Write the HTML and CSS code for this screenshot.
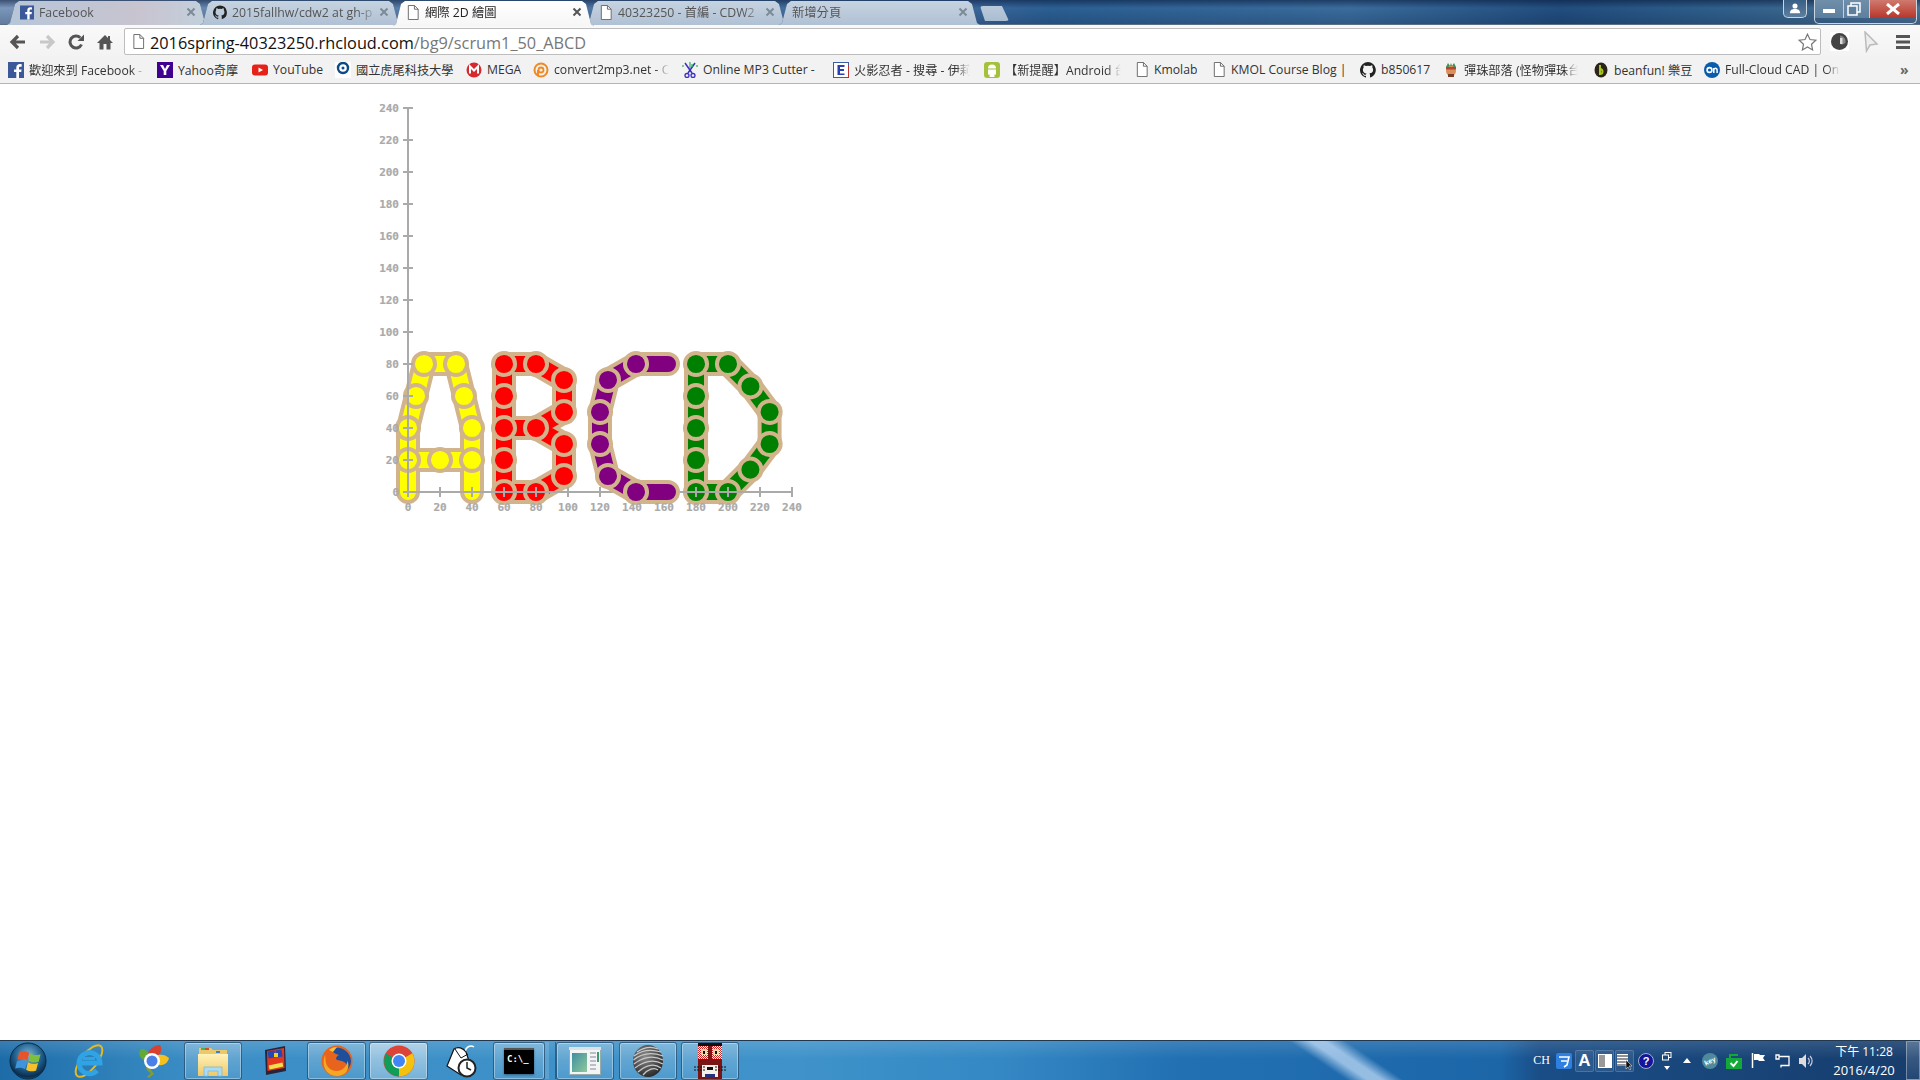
FILE: index.html
```html
<!DOCTYPE html>
<html lang="zh-Hant">
<head>
<meta charset="utf-8">
<title>網際 2D 繪圖</title>
<link rel="stylesheet" href="styles.css">
</head>
<body>
<svg class="defs" width="0" height="0" aria-hidden="true">
  <defs>
    <symbol id="i-fb" viewBox="0 0 16 16"><rect width="16" height="16" fill="#3b5998"/><path d="M11 16V10h2.2l.4-2.6H11V6c0-.8.3-1.3 1.4-1.3h1.3V2.3C13.3 2.2 12.6 2.1 11.8 2.1 9.8 2.1 8.3 3.3 8.3 5.6v1.8H6V10h2.3v6z" fill="#fff"/></symbol>
    <symbol id="i-page" viewBox="0 0 14 16"><path d="M2 .5h6.5L12.5 4.500v11h-10.500z" fill="#fff" stroke="#666"/><path d="M8.500.5v4h4" fill="none" stroke="#666"/></symbol>
    <symbol id="i-gh" viewBox="0 0 16 16"><path d="M8 0a8 8 0 0 0-2.500 15.600c.4.100.5-.2.500-.4v-1.400c-2.200.5-2.700-1-2.700-1-.4-.9-.9-1.200-.9-1.200-.7-.5.100-.5.100-.5.800.100 1.200.8 1.200.8.700 1.200 1.900.9 2.300.7.100-.5.300-.9.500-1.100-1.800-.2-3.600-.9-3.600-4 0-.9.300-1.600.8-2.100-.1-.2-.4-1 .1-2.100 0 0 .7-.2 2.200.8a7.600 7.600 0 0 1 4 0c1.500-1 2.200-.8 2.200-.8.400 1.100.2 1.900.1 2.100.5.600.8 1.300.8 2.100 0 3.100-1.900 3.700-3.700 3.900.3.300.6.800.6 1.500v2.200c0 .2.100.5.600.4A8 8 0 0 0 8 0z" fill="#222"/></symbol>
    <symbol id="i-x" viewBox="0 0 10 10"><path d="M1.500 1.500l7 7M8.500 1.500l-7 7" stroke="currentColor" stroke-width="2"/></symbol>
    <radialGradient id="g-orb" cx="50%" cy="35%" r="70%"><stop offset="0" stop-color="#7fb7d8"/><stop offset=".55" stop-color="#1d5d8c"/><stop offset=".85" stop-color="#0a2c4c"/><stop offset="1" stop-color="#2a89a8"/></radialGradient>
    <linearGradient id="g-folder" x1="0" y1="0" x2="0" y2="1"><stop offset="0" stop-color="#fff3b8"/><stop offset="1" stop-color="#eec868"/></linearGradient>
    <radialGradient id="g-ball" cx="40%" cy="35%" r="70%"><stop offset="0" stop-color="#8a8a8a"/><stop offset="1" stop-color="#262626"/></radialGradient>
    <linearGradient id="g-prev" x1="0" y1="0" x2="1" y2="1"><stop offset="0" stop-color="#3e8fa0"/><stop offset="1" stop-color="#8ec79b"/></linearGradient>
    <pattern id="p-check" width="2" height="2" patternUnits="userSpaceOnUse"><rect width="2" height="2" fill="#d92020"/><rect width="1" height="1" fill="#fff"/><rect x="1" y="1" width="1" height="1" fill="#fff"/></pattern>
  </defs>
</svg>

<header class="browser">
  <div class="tabbar">
    <div class="tabs">
      <div class="tab tab-fb"><svg class="tab-ico"><use href="#i-fb"/></svg><span class="tab-title">Facebook</span><svg class="tab-x"><use href="#i-x"/></svg></div>
      <div class="tab"><svg class="tab-ico"><use href="#i-gh"/></svg><span class="tab-title">2015fallhw/cdw2 at gh-p</span><svg class="tab-x"><use href="#i-x"/></svg></div>
      <div class="tab tab-on"><svg class="tab-ico"><use href="#i-page"/></svg><span class="tab-title">網際 2D 繪圖</span><svg class="tab-x"><use href="#i-x"/></svg></div>
      <div class="tab"><svg class="tab-ico"><use href="#i-page"/></svg><span class="tab-title">40323250 - 首編 - CDW2</span><svg class="tab-x"><use href="#i-x"/></svg></div>
      <div class="tab"><span class="tab-title">新增分頁</span><svg class="tab-x"><use href="#i-x"/></svg></div>
    </div>
    <div class="newtab"></div>
    <div class="winbtns">
      <div class="wb wb-user"><svg width="12" height="11" viewBox="0 0 14 13"><circle cx="7" cy="3.500" r="3" fill="#fff"/><path d="M1 12c0-4 2.500-5 6-5s6 1 6 5z" fill="#fff"/></svg></div>
      <div class="wgroup">
        <div class="wb wb-min"><span class="min-bar"></span></div>
        <div class="wb wb-max"><svg width="14" height="14" viewBox="0 0 14 14"><rect x="4" y="1" width="9" height="9" fill="none" stroke="#fff" stroke-width="1.500"/><rect x="1" y="4" width="9" height="9" fill="#5d7f9f" stroke="#fff" stroke-width="1.500"/></svg></div>
        <div class="wb wb-close"><svg width="16" height="12" viewBox="0 0 16 12"><path d="M2 1l12 10M14 1L2 11" stroke="#fff" stroke-width="3"/></svg></div>
      </div>
    </div>
  </div>

  <div class="toolbar">
    <div class="nav"><svg width="18" height="16" viewBox="0 0 18 16"><path d="M16 8H4M9 2L3 8l6 6" fill="none" stroke="#555" stroke-width="3.200"/></svg></div>
    <div class="nav"><svg width="18" height="16" viewBox="0 0 18 16"><path d="M2 8h12M9 2l6 6-6 6" fill="none" stroke="#c8c8c8" stroke-width="3.200"/></svg></div>
    <div class="nav"><svg width="16" height="16" viewBox="0 0 16 16"><path d="M13.500 10.500A6 6 0 1 1 12.300 3.800" fill="none" stroke="#555" stroke-width="3"/><path d="M9.500 7H16V.5z" fill="#555"/></svg></div>
    <div class="nav"><svg width="16" height="16" viewBox="0 0 16 16"><path d="M8 1L0 9h2.500v6.500H6.500V10h3v5.500h4V9H16L13 6V2h-2v2z" fill="#555"/></svg></div>
    <div class="omnibox">
      <svg class="omni-page"><use href="#i-page"/></svg>
      <span class="url"><span class="url-host">2016spring-40323250.rhcloud.com</span>/bg9/scrum1_50_ABCD</span>
      <svg class="star" width="19" height="18" viewBox="0 0 19 18"><path d="M9.500 1.200l2.500 5.300 5.800.7-4.300 4 1.100 5.700-5.100-2.900-5.100 2.900 1.100-5.700-4.300-4 5.800-.7z" fill="#fff" stroke="#777" stroke-width="1.200"/></svg>
    </div>
    <div class="actions">
      <div class="act"><svg width="19" height="19" viewBox="0 0 19 19"><rect width="19" height="19" fill="#fff"/><circle cx="9.500" cy="9.500" r="8.500" fill="#444"/><path d="M10 3.500a6 6 0 0 1 5.500 7.500l-3 1.500L10 12z" fill="#888"/><rect x="10" y="6" width="2.500" height="6" fill="#ddd"/></svg></div>
      <div class="act"><svg width="16" height="22" viewBox="0 0 16 22"><path d="M2 1l1.500 19 3.500-6 7-1z" fill="#eee" stroke="#bbb" stroke-width="1.500"/></svg></div>
      <div class="act"><svg width="14" height="14" viewBox="0 0 14 14"><path d="M0 0h14v3H0zM0 5.500h14v3H0zM0 11h14v3H0z" fill="#555"/></svg></div>
    </div>
  </div>

  <nav class="bookmarks">
    <a class="bm"><svg class="bm-ico"><use href="#i-fb"/></svg><span class="bm-t fade">歡迎來到 Facebook -</span></a>
    <a class="bm"><svg class="bm-ico" viewBox="0 0 16 16"><rect width="16" height="16" fill="#400090"/><path d="M3 3h3l2 4 2-4h3L9.300 9v4H6.700V9z" fill="#fff"/></svg><span class="bm-t">Yahoo奇摩</span></a>
    <a class="bm"><svg class="bm-ico" viewBox="0 0 16 16"><rect y="2.500" width="16" height="11" rx="3" fill="#e62117"/><path d="M6.500 5.500v5L11 8z" fill="#fff"/></svg><span class="bm-t">YouTube</span></a>
    <a class="bm"><svg class="bm-ico" viewBox="0 0 16 16"><rect width="16" height="16" fill="#fff"/><circle cx="8" cy="6" r="5" fill="none" stroke="#0b4a86" stroke-width="2.400"/><circle cx="8" cy="6" r="1.500" fill="#0b4a86"/></svg><span class="bm-t">國立虎尾科技大學</span></a>
    <a class="bm"><svg class="bm-ico" viewBox="0 0 16 16"><circle cx="8" cy="8" r="7.500" fill="#d9272e"/><path d="M4 11.500V4.500l4 4 4-4v7" fill="none" stroke="#fff" stroke-width="2"/></svg><span class="bm-t">MEGA</span></a>
    <a class="bm"><svg class="bm-ico" viewBox="0 0 16 16"><circle cx="8" cy="8" r="6.500" fill="none" stroke="#f08a24" stroke-width="2"/><circle cx="8" cy="8" r="2.500" fill="none" stroke="#f08a24" stroke-width="1.800"/><path d="M5 8v6" stroke="#f08a24" stroke-width="2"/></svg><span class="bm-t fade">convert2mp3.net - C</span></a>
    <a class="bm"><svg class="bm-ico" viewBox="0 0 16 16"><path d="M3 1l7 10M13 1L6 11" stroke="#3a2fc0" stroke-width="1.500"/><circle cx="5" cy="13.500" r="2" fill="none" stroke="#3a2fc0" stroke-width="1.300"/><circle cx="11" cy="13.500" r="2" fill="none" stroke="#3a2fc0" stroke-width="1.300"/><path d="M8 0v6M10 2v3M15 3v2M1 3v2" stroke="#27b35a" stroke-width="1.200"/></svg><span class="bm-t">Online MP3 Cutter -</span></a>
    <a class="bm"><svg class="bm-ico" viewBox="0 0 16 16"><rect x=".5" y=".5" width="15" height="15" fill="#fff" stroke="#3b5fa5"/><path d="M15.500 4v11.500H4" fill="none" stroke="#b33"/><path d="M4.500 3h7v2H7v2h4v2H7v2.500h4.500V13h-7z" fill="#2a3fb0"/></svg><span class="bm-t fade">火影忍者 - 搜尋 - 伊莉</span></a>
    <a class="bm"><svg class="bm-ico" viewBox="0 0 16 16"><rect width="16" height="16" rx="3" fill="#a4c13c"/><path d="M4 6.500a4 4 0 0 1 8 0zM4 7.500h8v5H10.500v2.500h-5V12.500H4z" fill="#fff"/></svg><span class="bm-t fade">【新提醒】Android 台</span></a>
    <a class="bm"><svg class="bm-ico pg"><use href="#i-page"/></svg><span class="bm-t">Kmolab</span></a>
    <a class="bm"><svg class="bm-ico pg"><use href="#i-page"/></svg><span class="bm-t">KMOL Course Blog |</span></a>
    <a class="bm"><svg class="bm-ico"><use href="#i-gh"/></svg><span class="bm-t">b850617</span></a>
    <a class="bm"><svg class="bm-ico" viewBox="0 0 16 16"><path d="M3 5l2-4 2 3 1-3 1 3 2-3 2 4z" fill="#3f8f5a"/><circle cx="8" cy="9" r="5" fill="#d9905a"/><rect x="3" y="5" width="10" height="2.500" fill="#b5452f"/><path d="M5 15h6v-3H5z" fill="#7c3b22"/></svg><span class="bm-t fade">彈珠部落 (怪物彈珠台</span></a>
    <a class="bm"><svg class="bm-ico" viewBox="0 0 16 16"><ellipse cx="8" cy="8" rx="6.500" ry="7.500" fill="#2b2418"/><path d="M7 3v9a2.500 2.500 0 1 0 0-5" fill="none" stroke="#a8c81e" stroke-width="2"/></svg><span class="bm-t">beanfun! 樂豆</span></a>
    <a class="bm"><svg class="bm-ico" viewBox="0 0 16 16"><circle cx="8" cy="8" r="8" fill="#0b5cad"/><circle cx="5.500" cy="8" r="2.400" fill="none" stroke="#fff" stroke-width="1.600"/><path d="M9.800 11V6M9.800 7.500c1.800-2 3.300-1 3.300 .5v3" fill="none" stroke="#fff" stroke-width="1.500"/></svg><span class="bm-t fade">Full-Cloud CAD | Onshape</span></a>
    <span class="bm-more">»</span>
  </nav>
</header>

<main class="content">
  <svg class="chart" width="500" height="440" viewBox="0 0 500 440">
    <g transform="translate(48 393) scale(1.6 -1.6)" fill="none" stroke-linecap="round" stroke-linejoin="round">
      <g stroke="#d2b48c" stroke-width="15">
        <path d="M0 0V40L5 60L10 80H30L35 60L40 40V0M0 20H40"/>
        <path d="M60 0V80H80L97.500 70V50L80 40H60M80 40L97.500 30V10L80 0H60"/>
        <path d="M180 0V80H200L214 66L226 50V30L214 14L200 0H180"/>
      </g>
      <path stroke="#ff0" stroke-width="10" d="M0 0V40L5 60L10 80H30L35 60L40 40V0M0 20H40"/>
      <path stroke="#f00" stroke-width="10" d="M60 0V80H80L97.500 70V50L80 40H60M80 40L97.500 30V10L80 0H60"/>
      <path stroke="#008000" stroke-width="10" d="M180 0V80H200L214 66L226 50V30L214 14L200 0H180"/>
      <g stroke="#d2b48c" stroke-width="2.500" fill="#ff0">
        <circle cx="0" cy="20" r="6.900"/><circle cx="0" cy="40" r="6.900"/><circle cx="5" cy="60" r="6.900"/><circle cx="10" cy="80" r="6.900"/><circle cx="30" cy="80" r="6.900"/><circle cx="35" cy="60" r="6.900"/><circle cx="40" cy="40" r="6.900"/><circle cx="40" cy="20" r="6.900"/><circle cx="20" cy="20" r="6.900"/>
      </g>
      <g stroke="#d2b48c" stroke-width="2.500" fill="#f00">
        <circle cx="60" cy="0" r="6.900"/><circle cx="60" cy="20" r="6.900"/><circle cx="60" cy="40" r="6.900"/><circle cx="60" cy="60" r="6.900"/><circle cx="60" cy="80" r="6.900"/><circle cx="80" cy="80" r="6.900"/><circle cx="97.500" cy="70" r="6.900"/><circle cx="97.500" cy="50" r="6.900"/><circle cx="80" cy="40" r="6.900"/><circle cx="97.500" cy="30" r="6.900"/><circle cx="97.500" cy="10" r="6.900"/><circle cx="80" cy="0" r="6.900"/>
      </g>
      <g stroke="#d2b48c" stroke-width="2.500" fill="#008000">
        <circle cx="180" cy="0" r="6.900"/><circle cx="180" cy="20" r="6.900"/><circle cx="180" cy="40" r="6.900"/><circle cx="180" cy="60" r="6.900"/><circle cx="180" cy="80" r="6.900"/><circle cx="200" cy="80" r="6.900"/><circle cx="214" cy="66" r="6.900"/><circle cx="226" cy="50" r="6.900"/><circle cx="226" cy="30" r="6.900"/><circle cx="214" cy="14" r="6.900"/><circle cx="200" cy="0" r="6.900"/>
      </g>
    </g>
    <g transform="translate(48 393)" stroke="#aaa" stroke-width="2" fill="none">
      <path d="M0 0V-384M0 0H384"/>
      <path d="M-5 0H5M-5 -32H5M-5 -64H5M-5 -96H5M-5 -128H5M-5 -160H5M-5 -192H5M-5 -224H5M-5 -256H5M-5 -288H5M-5 -320H5M-5 -352H5M-5 -384H5"/>
      <path d="M0 -5V5M32 -5V5M64 -5V5M96 -5V5M128 -5V5M160 -5V5M192 -5V5M224 -5V5M256 -5V5M288 -5V5M320 -5V5M352 -5V5M384 -5V5"/>
    </g>
    <g transform="translate(48 393) scale(1.6 -1.6)" fill="none" stroke-linecap="round" stroke-linejoin="round">
      <path stroke="#d2b48c" stroke-width="15" d="M162.500 80H142.500L125 70L120 50V30L125 10L142.500 0H162.500"/>
      <path stroke="#800080" stroke-width="10" d="M162.500 80H142.500L125 70L120 50V30L125 10L142.500 0H162.500"/>
      <g stroke="#d2b48c" stroke-width="2.500" fill="#800080">
        <circle cx="142.500" cy="80" r="6.900"/><circle cx="125" cy="70" r="6.900"/><circle cx="120" cy="50" r="6.900"/><circle cx="120" cy="30" r="6.900"/><circle cx="125" cy="10" r="6.900"/><circle cx="142.500" cy="0" r="6.900"/>
      </g>
    </g>
    <g class="lab lab-y" transform="translate(39 397)">
      <text y="0">0</text><text y="-32">20</text><text y="-64">40</text><text y="-96">60</text><text y="-128">80</text><text y="-160">100</text><text y="-192">120</text><text y="-224">140</text><text y="-256">160</text><text y="-288">180</text><text y="-320">200</text><text y="-352">220</text><text y="-384">240</text>
    </g>
    <g class="lab lab-x" transform="translate(48 412)">
      <text x="0">0</text><text x="32">20</text><text x="64">40</text><text x="96">60</text><text x="128">80</text><text x="160">100</text><text x="192">120</text><text x="224">140</text><text x="256">160</text><text x="288">180</text><text x="320">200</text><text x="352">220</text><text x="384">240</text>
    </g>
  </svg>
</main>

<footer class="taskbar">
  <div class="task-left">
    <div class="tb tb-orb"><svg width="38" height="38" viewBox="0 0 38 38"><circle cx="19" cy="19" r="18" fill="url(#g-orb)" stroke="#0b2a44"/><g transform="translate(19 19) scale(1.25) translate(-17 -19)"><path d="M10 12c3-1.500 5-1 8 .5l-1.500 6c-3-1.500-5-1.500-8-.5z" fill="#e8542a"/><path d="M19 13c3 1.500 5 1.500 8 .5l-1.500 6c-3 1-5 1-8-.5z" fill="#7ec03c"/><path d="M8.200 19c3-1 5-1 8 .5l-1.500 6c-3-1.500-5-1.500-8-.5z" fill="#3f95dc"/><path d="M17 20c3 1.500 5 1.500 8 .5l-1.500 6c-3 1-5 1-8-.5z" fill="#f5c02c"/></g></svg></div>
    <div class="tb tb-ie"><svg width="34" height="34" viewBox="0 0 34 34"><ellipse cx="17" cy="17" rx="19" ry="8" transform="rotate(-52 17 17)" fill="none" stroke="#e6b91e" stroke-width="2"/><path d="M9 19h19a10.500 10.500 0 1 0-3 7.500" fill="none" stroke="#2fa3e3" stroke-width="5"/><path d="M11 14.500h12" stroke="#2fa3e3" stroke-width="3"/></svg></div>
    <div class="tb tb-can"><svg width="32" height="34" viewBox="0 0 32 34"><path d="M8 17C2 14 1 8 4 5c4 0 7 2 8 5z" fill="#63a93a"/><path d="M11 9c2-5 7-8 12-8 2 3 1 8-1 10z" fill="#d9402f"/><path d="M21 11c4-1 8 0 11 3-1 5-6 8-10 7z" fill="#f3c01e"/><path d="M9 19c-1 6 2 9 5 10l-4 4 2 1 5-4z" fill="#7d9c3a"/><circle cx="15" cy="17" r="8" fill="#fff"/><circle cx="15" cy="17" r="5.500" fill="#4a7fe8"/></svg></div>
    <div class="tb tb-box tb-w58"><svg width="32" height="32" viewBox="0 0 32 32"><path d="M2 3h12l2 2h14v10H2z" fill="#e9c96b"/><rect x="4" y="3" width="4" height="2" fill="#4caf50"/><rect x="8" y="3" width="4" height="2" fill="#d9482f"/><rect x="19" y="6" width="4" height="2" fill="#3f7fcb"/><path d="M1 9h30v22H1z" fill="url(#g-folder)"/><path d="M7 31V22h18v9h-4v-5H11v5z" fill="#a9dcf2" stroke="#7fb9d8" stroke-width=".800"/></svg></div>
    <div class="tb tb-w63"><svg width="24" height="30" viewBox="0 0 24 30"><path d="M2 4L22 0l1 25-20 4z" fill="#2a2438"/><path d="M4 5l17-3 .5 20-17 3z" fill="#e2381f"/><rect x="5" y="5" width="7" height="7" fill="#2447b3" transform="rotate(-10 8 8)"/><rect x="13" y="4" width="6" height="7" fill="#2447b3" transform="rotate(-10 16 7)"/><rect x="11" y="7" width="4" height="4" fill="#f3d21e"/><rect x="6" y="18" width="14" height="4" fill="#f5e04a" transform="rotate(-12 13 20)"/></svg></div>
    <div class="tb tb-box tb-w59"><svg width="32" height="32" viewBox="0 0 32 32"><circle cx="16" cy="16" r="15.500" fill="#e8641c"/><path d="M10 4a14 14 0 0 1 20 12c0 4-2 7-4 9 1-5-1-7-3-8-2-2-7-1-8-3 0-2 1-3 3-4-3-1-6-2-8-6z" fill="#1d4f9c"/><path d="M4 10c1 4 0 8 3 12 4 5 12 5 16 1 3-3 4-7 3-8 3 5 1 13-5 15-8 3-16-1-18-9-1-4 0-8 1-11z" fill="#f5a623"/><path d="M8 5c2-2 5-3 8-3l-4 5z" fill="#f8c13a"/></svg></div>
    <div class="tb tb-box tb-w59 tb-hot"><svg width="32" height="32" viewBox="0 0 32 32"><circle cx="16" cy="16" r="15.500" fill="#db4437"/><path d="M16 16L3 8.500A15.500 15.500 0 0 0 16 31.500z" fill="#0f9d58"/><path d="M16 16l13.400-7.750A15.500 15.500 0 0 1 16 31.500z" fill="#f4c20d"/><circle cx="16" cy="16" r="7.500" fill="#fff"/><circle cx="16" cy="16" r="6" fill="#4285f4"/></svg></div>
    <div class="tb tb-w65"><svg width="34" height="34" viewBox="0 0 34 34"><path d="M21 8c1-6 6-7 9-5" fill="none" stroke="#fff" stroke-width="1.500"/><path d="M10 5L3 22l14 9 8-14-3-9c-3-4-8-6-12-3z" fill="#fff" stroke="#111" stroke-width="1.200"/><path d="M11 5l6 9M17 14l7-4" stroke="#111" stroke-width="1" fill="none"/><circle cx="23" cy="24" r="8.500" fill="#fff" stroke="#222" stroke-width="2"/><path d="M23 18v6l4 2" fill="none" stroke="#222" stroke-width="1.500"/></svg></div>
    <div class="tb tb-box tb-w52"><div class="cmd"><span class="cmd-t">C:\_</span></div></div>
    <span class="tb-sliver"></span>
    <div class="tb tb-box tb-w58"><svg width="32" height="28" viewBox="0 0 32 28"><rect x=".5" y=".5" width="31" height="27" fill="#f3f5f5" stroke="#9aa"/><rect y="0" width="32" height="3" fill="#d9e4e8"/><rect x="3" y="6" width="15" height="19" fill="url(#g-prev)"/><path d="M21 6h6M21 10h6M21 14h6M21 18h6M21 22h6" stroke="#aab" stroke-width="1.500"/><rect x="28" y="5" width="2" height="10" fill="#3a9a7a"/></svg></div>
    <div class="tb tb-box tb-w58"><svg width="32" height="34" viewBox="0 0 32 34"><ellipse cx="16" cy="17" rx="15" ry="16" fill="url(#g-ball)"/><path d="M5 8c7-5 14-6 21-3M2 12C10 6 19 5 29 8M1.500 16C10 9 20 8 31 12M2 20C11 13 21 11 31 16M3 24C12 17 22 15 31 20M6 28C14 21 22 19 29 24M11 31c5-6 11-8 15-5" fill="none" stroke="#c8c8c8" stroke-width="1.300"/></svg></div>
    <div class="tb tb-box tb-w58"><svg width="32" height="36" viewBox="0 0 32 36"><rect x="4" y="0" width="24" height="36" fill="#7a1515"/><rect x="4" y="0" width="24" height="3" fill="#111"/><rect x="4" y="3" width="10" height="13" fill="url(#p-check)"/><rect x="18" y="3" width="10" height="13" fill="url(#p-check)"/><rect x="7" y="6" width="6" height="6" fill="#f0d8a8"/><rect x="19" y="6" width="6" height="6" fill="#f0d8a8"/><rect x="9" y="8" width="2" height="3" fill="#111"/><rect x="21" y="8" width="2" height="3" fill="#111"/><rect x="8" y="22" width="16" height="12" fill="#f4efe8"/><path d="M0 24h11M0 27h11M21 24h11M21 27h11" stroke="#111" stroke-width="1.200" stroke-dasharray="2 1"/><rect x="13" y="24" width="6" height="3" fill="#111"/><rect x="11" y="31" width="10" height="3" fill="#23327a"/></svg></div>
  </div>
  <div class="tray">
    <span class="tray-ch">CH</span>
    <svg class="t-i" width="16" height="16" viewBox="0 0 16 16"><rect width="16" height="16" rx="2" fill="#2f7fe0"/><path d="M3 4h10l-2 8-3 2M5 8h6" fill="none" stroke="#fff" stroke-width="1.600"/></svg>
    <div class="ime">
      <span class="ime-b ime-a">A</span>
      <span class="ime-b"><svg width="16" height="16" viewBox="0 0 16 16"><rect x="1" y="1" width="14" height="14" fill="#fff"/><rect x="2" y="2" width="6" height="12" fill="#999"/></svg></span>
      <span class="ime-b"><svg width="17" height="18" viewBox="0 0 17 18"><rect x="1" y="2" width="11" height="12" fill="#fff"/><path d="M1 4h11M1 7h11M1 10h11M1 13h9" stroke="#223" stroke-width="1"/><path d="M10 8v9l2-2 2 3 1-1-2-3h3z" fill="#111" stroke="#fff" stroke-width=".500"/></svg></span>
    </div>
    <span class="t-q">?</span>
    <div class="t-stack"><svg width="10" height="9" viewBox="0 0 10 9"><rect x="3" y=".5" width="6" height="5" fill="none" stroke="#fff"/><rect x=".5" y="3" width="6" height="5" fill="#1f4a78" stroke="#fff"/></svg><svg width="6" height="4" viewBox="0 0 6 4"><path d="M0 0h6L3 4z" fill="#fff"/></svg></div>
    <svg class="t-tri" width="8" height="5" viewBox="0 0 8 5"><path d="M0 5h8L4 0z" fill="#fff"/></svg>
    <svg class="t-key" width="16" height="16" viewBox="0 0 16 16"><circle cx="8" cy="8" r="8" fill="#4f8a9c"/><text x="8" y="10.500" class="key-t" transform="rotate(-25 8 8)">key</text></svg>
    <svg class="t-i2" width="16" height="17" viewBox="0 0 16 17"><rect y="6" width="16" height="11" fill="#14a83a"/><path d="M4 7V3h8" fill="none" stroke="#14a83a" stroke-width="2"/><path d="M4.500 11l3 3 4-5" fill="none" stroke="#fff" stroke-width="2"/></svg>
    <svg class="t-i2" width="15" height="15" viewBox="0 0 15 15"><path d="M1.500 0v15" stroke="#fff" stroke-width="1.500"/><path d="M3 1h5l1 1h5l-2 3 2 3H8L7 7H3z" fill="#fff"/></svg>
    <svg class="t-i2" width="15" height="15" viewBox="0 0 15 15"><path d="M1 2h3v4H1zM4 3.500h10v9H6v2" fill="none" stroke="#fff" stroke-width="1.300"/></svg>
    <svg class="t-i3" width="15" height="14" viewBox="0 0 15 14"><path d="M0 4h3l4-4v14l-4-4H0z" fill="#ddd"/><path d="M9 4a4 4 0 0 1 0 6M11 2a7 7 0 0 1 0 10" fill="none" stroke="#ccd" stroke-width="1.200"/></svg>
    <div class="clock"><span>下午 11:28</span><span class="clock-d">2016/4/20</span></div>
    <div class="show-desk"></div>
  </div>
</footer>
</body>
</html>
```
FILE: styles.css
```css
* { box-sizing: border-box; }
html, body { margin: 0; height: 100%; }
body {
  display: flex;
  flex-direction: column;
  height: 100vh;
  overflow: hidden;
  background: #fff;
  font-family: "Open Sans", "Noto Sans CJK TC", sans-serif;
}
.defs { position: absolute; }

/* browser frame */
.tabbar {
  display: flex;
  height: 25px;
  padding: 1px 3px 0 7px;
  background:
    linear-gradient(180deg, rgba(8, 24, 56, .55) 0, rgba(8, 24, 56, 0) 8px, rgba(8, 24, 56, .22) 100%),
    linear-gradient(90deg, #7b97bb 0, #5d83ac 300px, #3a669a 980px, #2b5f93 1050px, #3a6c9c 1350px, #214d7e 1560px, #2f5f8b 1720px, #4c7193 1920px);
  border-bottom: 1px solid #5d6f85;
}
.tabs { display: flex; }
.tab {
  position: relative;
  display: flex;
  align-items: center;
  width: 201px;
  height: 24px;
  margin-right: -8px;
  padding: 0 12px 2px 13px;
  color: #555;
  font-size: 12.3px;
  filter: drop-shadow(0 0 .6px #3f5066);
}
.tab::before {
  content: "";
  position: absolute;
  inset: 0;
  z-index: -1;
  background: linear-gradient(180deg, #c6d3e0, #b0c1d4);
  clip-path: polygon(0 100%, 3px 92%, 8px 12%, 12px 0, calc(100% - 12px) 0, calc(100% - 8px) 12%, calc(100% - 3px) 92%, 100% 100%);
}
.tab-fb::before { background: linear-gradient(90deg, #b6c6d8 0, #c8c4d0 65%, #c2d0dc 100%); }
.tab-on { z-index: 3; height: 25px; padding-bottom: 3px; color: #222; }
.tab-on::before { background: linear-gradient(180deg, #fff, #f6f6f6); }
.tab-ico { width: 14px; height: 15px; flex: none; margin-right: 5px; }
.tab-title {
  flex: 1;
  overflow: hidden;
  white-space: nowrap;
  -webkit-mask-image: linear-gradient(90deg, #000 85%, transparent);
  mask-image: linear-gradient(90deg, #000 85%, transparent);
}
.tab-x { width: 10px; height: 10px; flex: none; color: #7d8a98; }
.tab-on .tab-x { color: #555; }
.newtab {
  width: 29px;
  height: 15px;
  margin: 5px 0 0 8px;
  background: linear-gradient(180deg, #b9c9da, #a9bdd2);
  clip-path: polygon(0 0, 22px 0, 100% 100%, 5px 100%);
  border-radius: 3px;
}
.winbtns { display: flex; margin-left: auto; margin-top: -1px; gap: 7px; }
.wgroup { display: flex; border: 1px solid #c9d5df; border-top: 0; border-radius: 0 0 5px 5px; overflow: hidden; }
.wb { display: flex; align-items: center; justify-content: center; height: 18px; }
.wb-user { width: 24px; border: 1px solid #c9d5df; border-top: 0; border-radius: 0 0 5px 5px; background: linear-gradient(180deg, #385f86, #5d7f9f); }
.wb-min { width: 28px; background: linear-gradient(180deg, #6f8ea9, #5d7f9f); }
.min-bar { width: 12px; height: 4px; margin-top: 4px; background: #fff; }
.wb-max { width: 26px; padding-right: 5px; background: linear-gradient(180deg, #6f8ea9, #5d7f9f); border-left: 1px solid #c3d0dc; }
.wb-close { width: 47px; background: linear-gradient(180deg, #cf7a6f, #b9352a); border-left: 1px solid #c3d0dc; }

.toolbar {
  display: flex;
  height: 31px;
  padding: 3px 0 0 3px;
  background: linear-gradient(180deg, #f9f9f9, #f3f3f3);
}
.nav { display: flex; align-items: center; justify-content: center; width: 29px; height: 27px; }
.omnibox {
  display: flex;
  align-items: center;
  flex: 1;
  height: 27px;
  margin-left: 5px;
  padding: 0 3px 0 7px;
  background: #fff;
  border: 1px solid #bdbdbd;
  border-radius: 2px;
}
.omni-page { width: 13px; height: 15px; flex: none; margin-right: 5px; }
.url { flex: 1; padding-top: 2px; color: #777; font-size: 16.3px; white-space: nowrap; }
.url-host { color: #111; }
.actions { display: flex; width: 99px; padding-left: 2px; }
.act { display: flex; align-items: center; justify-content: center; width: 32px; height: 27px; }

.bookmarks {
  display: flex;
  align-items: center;
  height: 28px;
  padding-left: 8px;
  background: #f2f2f2;
  border-bottom: 1px solid #b4b4b4;
  font-size: 12.2px;
  color: #333;
}
.bm { display: flex; align-items: center; flex: none; gap: 5px; overflow: hidden; white-space: nowrap; }
.bm-ico { width: 16px; height: 16px; flex: none; }
.bm-ico.pg { width: 14px; height: 15px; }
.bm-t { flex: none; overflow: hidden; }
.fade {
  -webkit-mask-image: linear-gradient(90deg, #000 88%, transparent);
  mask-image: linear-gradient(90deg, #000 88%, transparent);
}
.bm:nth-child(1) { width: 149px; } .bm:nth-child(1) .bm-t { width: 116px; }
.bm:nth-child(2) { width: 95px; }
.bm:nth-child(3) { width: 83px; }
.bm:nth-child(4) { width: 131px; }
.bm:nth-child(5) { width: 67px; }
.bm:nth-child(6) { width: 149px; } .bm:nth-child(6) .bm-t { width: 115px; }
.bm:nth-child(7) { width: 151px; }
.bm:nth-child(8) { width: 151px; } .bm:nth-child(8) .bm-t { width: 116px; }
.bm:nth-child(9) { width: 151px; } .bm:nth-child(9) .bm-t { width: 116px; }
.bm:nth-child(10) { width: 77px; }
.bm:nth-child(11) { width: 148px; }
.bm:nth-child(12) { width: 83px; }
.bm:nth-child(13) { width: 150px; } .bm:nth-child(13) .bm-t { width: 114px; }
.bm:nth-child(14) { width: 111px; }
.bm:nth-child(15) { width: 136px; } .bm:nth-child(15) .bm-t { width: 115px; }
.bm-more { margin-left: 60px; color: #666; font-size: 14px; font-weight: 700; }

/* page */
.content { flex: 1; min-height: 0; }
.chart { display: block; margin: 15px 0 0 360px; }
.lab { font: 700 11px "DejaVu Sans Mono", monospace; fill: #aaa; stroke: #aaa; stroke-width: .2px; }
.lab-y { text-anchor: end; }
.lab-x { text-anchor: middle; }

/* taskbar */
.taskbar {
  display: flex;
  justify-content: space-between;
  height: 40px;
  flex: none;
  border-top: 1px solid #22384e;
  background:
    linear-gradient(180deg, rgba(255, 255, 255, .12), rgba(255, 255, 255, 0) 45%),
    linear-gradient(34deg, transparent 753px, rgba(200, 225, 250, .7) 765px, rgba(200, 225, 250, .7) 773px, transparent 785px),
    linear-gradient(90deg, #1d6ca8 0, #3c8fc6 200px, #3f93ca 800px, #3488c4 1000px, #2270b2 1180px, #1c66a8 1500px, #1a4d86 1540px, #173d6c 1920px);
}
.task-left { display: flex; align-items: stretch; }
.tb { display: flex; align-items: center; justify-content: center; flex: none; }
.tb-orb { width: 55px; }
.tb-ie { width: 64px; margin-left: 2px; }
.tb-can { width: 63px; }
.tb-w52 { width: 52px; }
.tb-w58 { width: 58px; }
.tb-w59 { width: 59px; }
.tb-w63 { width: 65px; }
.tb-w65 { width: 65px; }
.tb-box {
  border: 1px solid rgba(16, 48, 78, .6);
  border-radius: 3px;
  box-shadow: inset 0 0 0 1px rgba(255, 255, 255, .35);
  background: linear-gradient(180deg, rgba(255, 255, 255, .28), rgba(255, 255, 255, .08));
  margin-top: 1px;
}
.tb-w63 + .tb-w59 { margin-right: 3px; }
.tb-hot { background: linear-gradient(180deg, rgba(255, 255, 255, .55), rgba(255, 255, 255, .3)); }
.tb-sliver {
  width: 11px;
  margin: 1px 0;
  border-left: 4px solid rgba(255, 255, 255, .15);
  border-right: 1px solid rgba(16, 48, 78, .5);
}
.tb-w52 + .tb-sliver + .tb-box { margin-right: 5px; }
.tb-w58:nth-last-child(2) { margin-right: 4px; }
.cmd {
  width: 30px;
  height: 26px;
  padding: 5px 0 0 3px;
  background: #000;
  border-top: 2px solid #555;
  color: #fff;
  font: 700 9px/1 "DejaVu Sans Mono", monospace;
  box-shadow: 0 1px 2px rgba(0, 0, 0, .4);
}
.cmd-t { display: block; }

.tray { display: flex; align-items: center; color: #fff; }
.tray-ch { margin-right: 6px; font: 12px "Liberation Serif", serif; }
.t-i { margin-right: 3px; }
.ime { display: flex; gap: 1px; margin-right: 4px; padding: 2px 0; }
.ime-b {
  display: flex;
  align-items: center;
  justify-content: center;
  width: 19px;
  height: 22px;
  background: rgba(255, 255, 255, .08);
  border: 1px solid rgba(255, 255, 255, .16);
  border-radius: 2px;
}
.ime-a { font: 700 17px "Liberation Sans", sans-serif; }
.t-q {
  width: 16px;
  height: 16px;
  border: 1px solid #9fb0cc;
  border-radius: 50%;
  background: #14149c;
  font: 700 11px/14px "Liberation Sans", sans-serif;
  text-align: center;
}
.t-stack { display: flex; flex-direction: column; align-items: center; gap: 5px; margin: 0 11px 0 8px; }
.t-tri { margin-right: 11px; }
.t-key { margin-right: 8px; }
.key-t { font: 700 7px "Liberation Sans", sans-serif; fill: #fff; text-anchor: middle; }
.t-i2 { margin-right: 9px; }
.clock {
  display: flex;
  flex-direction: column;
  align-items: center;
  gap: 2px;
  width: 76px;
  margin-left: 12px;
  font-size: 12px;
  line-height: 16px;
}
.clock-d { font-size: 13px; }
.show-desk {
  width: 14px;
  height: 100%;
  margin-left: 4px;
  border: 1px solid rgba(255, 255, 255, .35);
  background: linear-gradient(180deg, rgba(255, 255, 255, .2), rgba(255, 255, 255, .05));
}
```
